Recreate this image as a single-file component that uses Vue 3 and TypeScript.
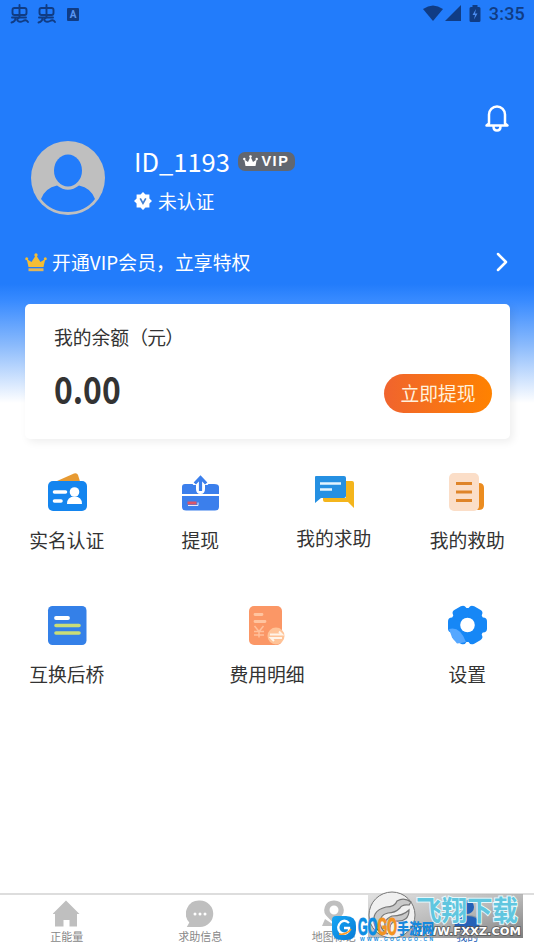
<script setup lang="ts">
interface Entry {
  id: string
  label: string
}

const primary: Entry[] = [
  { id: 'identity', label: '实名认证' },
  { id: 'withdraw', label: '提现' },
  { id: 'help', label: '我的求助' },
  { id: 'rescue', label: '我的救助' },
]

const secondary: Entry[] = [
  { id: 'bridge', label: '互换后桥' },
  { id: 'fees', label: '费用明细' },
  { id: 'settings', label: '设置' },
]

const teeth: number[] = [0, 60, 120, 180, 240, 300]
</script>

<template>
  <main class="page">
    <header class="hero">
      <div class="status">
        <div class="status-left">
          <svg v-for="n in 2" :key="n" class="bug" width="20" height="20" viewBox="0 0 20 20" fill="none" stroke="#103c84" stroke-width="1.900" stroke-linecap="round" stroke-linejoin="round">
            <rect x="2.500" y="4" width="14" height="7" rx="2" />
            <path d="M9.500 1v12.500M2 13.500h14M5.500 14q0 3.500-4 4.500M9 14q-3 1.500-1 3t5 0q3-2 5 1" />
          </svg>
          <span class="ime">A</span>
        </div>
        <div class="status-right">
          <svg width="20" height="16" viewBox="0 0 20 16"><path d="M0 4Q10-3 20 4L10 16Z" fill="#103c84" /></svg>
          <svg width="16" height="16" viewBox="0 0 16 16"><path d="M16 0V16H0Z" fill="#103c84" /></svg>
          <svg class="battery" width="12" height="17" viewBox="0 0 12 17">
            <path d="M3.500 2V0h5v2H10q1.500 0 1.500 1.500v12Q11.500 17 10 17H2Q.5 17 .5 15.500v-12Q.5 2 2 2Z" fill="#103c84" />
            <path d="M7 4 3.500 10H6l-1 4.500L8.500 8.500H6Z" fill="#4c8df0" />
          </svg>
          <span class="clock">3:35</span>
        </div>
      </div>

      <div class="notice">
        <svg width="26" height="28" viewBox="0 0 26 28" fill="none" stroke="#fff" stroke-width="2.500" stroke-linecap="round" stroke-linejoin="round">
          <path d="M5 19.500V10.500a8 8 0 0 1 16 0V19.500l2.500 2H2.500ZM9.500 22.500q0 4 3.500 4t3.500-4" />
        </svg>
      </div>

      <section class="profile">
        <svg class="avatar" width="74" height="74" viewBox="0 0 74 74">
          <circle cx="37" cy="37" r="37" fill="#bfbfbf" />
          <ellipse cx="37" cy="29.500" rx="14" ry="16" fill="#227cfb" />
          <path d="M10 58Q14 47 26 44.500Q37 53 48 44.500Q60 47 64 58Q54 71 37 71Q20 71 10 58Z" fill="#227cfb" />
        </svg>
        <div class="who">
          <div class="name-row">
            <span class="name">ID_1193</span>
            <span class="vip">
              <svg width="15" height="12" viewBox="0 0 15 12" fill="#fff">
                <path d="M2.500 11 1.300 4.500 5 7 7.500 1.500 10 7l3.700-2.500L12.500 11Z" />
                <circle cx="1.300" cy="4" r="1.200" /><circle cx="7.500" cy="1.500" r="1.300" /><circle cx="13.700" cy="4" r="1.200" />
              </svg>
              VIP
            </span>
          </div>
          <div class="auth-row">
            <svg width="18" height="18" viewBox="0 0 18 18">
              <path d="M9 0 11.500 2.600 15.400 2.600 15.400 6.500 18 9 15.400 11.500V15.400H11.500L9 18 6.500 15.400H2.600V11.500L0 9 2.600 6.500V2.600H6.500Z" fill="#fff" />
              <path d="m6.200 6.300 2.800 5 2.800-5" fill="none" stroke="#427fd0" stroke-width="1.700" />
            </svg>
            <span>未认证</span>
          </div>
        </div>
      </section>

      <div class="member">
        <svg width="22" height="19" viewBox="0 0 22 19">
          <path d="M3.500 14 1.700 6 6.500 9 11 2l4.500 7 4.800-3-1.800 8Z" fill="#f4bd35" />
          <circle cx="1.700" cy="5.800" r="1.500" fill="#f4bd35" /><circle cx="11" cy="2" r="1.700" fill="#f4bd35" /><circle cx="20.300" cy="5.800" r="1.500" fill="#f4bd35" />
          <path d="M3.500 15.300h15v2.900h-15Z" fill="#e2b659" />
        </svg>
        <span class="member-text">开通VIP会员，立享特权</span>
        <svg width="12" height="20" viewBox="0 0 12 20"><path d="m2 2 8 8-8 8" fill="none" stroke="#fff" stroke-width="2.500" stroke-linecap="round" stroke-linejoin="round" /></svg>
      </div>

      <section class="balance">
        <div class="balance-title">我的余额<span class="unit">（元）</span></div>
        <div class="balance-row">
          <strong>0.00</strong>
          <button class="cash">立即提现</button>
        </div>
      </section>
    </header>

    <nav class="menu">
      <a v-for="e in primary" :key="e.id" class="entry" :class="e.id">
        <svg class="icon" width="42" height="42" viewBox="0 0 42 42">
          <g v-if="e.id === 'identity'">
            <path d="M11 10 28 2.500q3-1 4 1.500l2.500 8Z" fill="#e79a32" />
            <rect x="2" y="10" width="39" height="30" rx="5" fill="#1485ef" />
            <path d="M8.500 21h11M8.500 30h6.500" stroke="#fff" stroke-width="3.600" stroke-linecap="round" />
            <circle cx="28.500" cy="21" r="4.800" fill="#fff" />
            <path d="M21 33q0-7.500 7.500-7.500T36 33Z" fill="#fff" />
          </g>
          <g v-else-if="e.id === 'withdraw'">
            <path d="M3 16q0-3 3-3h29q5 0 5 3v7H3ZM3 25h37v11q0 3.500-4 3.500H7q-4 0-4-3.500Z" fill="#3b7fec" />
            <path d="m13.500 14 8-8.500 8 8.500h-3.500v4q0 5-4.500 5t-4.500-5v-4Z" fill="#fff" />
            <path d="m15.800 12.500 5.700-6 5.700 6M21.500 7v13" fill="none" stroke="#3b7fec" stroke-width="3.200" />
            <path d="M8.500 32h9" stroke="#d95669" stroke-width="3" /><path d="M9 34.500h10v-3" fill="none" stroke="#e6e9f8" />
          </g>
          <g v-else-if="e.id === 'help'" transform="translate(0 -3)">
            <path d="M33 13h6q2 0 2 2v25l-6-6H12q-2 0-2-2v-2h23Z" fill="#f4b51c" />
            <path d="M3 8h28q2 0 2 2v18q0 2-2 2H8l-6 5V9q0-1 1-1Z" fill="#2590e2" />
            <path d="M7 15.500h21M7 21.500h12" stroke="#e3f5ff" stroke-width="2.500" />
          </g>
          <g v-else>
            <path d="M30 12h3q5 0 5 5v17q0 5-5 5h-3Z" fill="#eb8c20" />
            <rect x="3" y="2" width="30" height="38" rx="5" fill="#fbdec8" />
            <path d="M10 12.500h16M10 21h16M10 29.500h16" stroke="#df8429" stroke-width="2.800" />
          </g>
        </svg>
        <span>{{ e.label }}</span>
      </a>
    </nav>

    <nav class="menu second">
      <a v-for="e in secondary" :key="e.id" class="entry" :class="e.id">
        <svg class="icon" width="42" height="42" viewBox="0 0 42 42">
          <g v-if="e.id === 'bridge'">
            <rect x="2" y="2" width="38.500" height="39" rx="4.500" fill="#3480e8" />
            <path d="M10 14h12" stroke="#fff" stroke-width="3.800" stroke-linecap="round" />
            <path d="M10 21.500h23M10 29h23" stroke="#c9dd77" stroke-width="3.600" stroke-linecap="round" />
          </g>
          <g v-else-if="e.id === 'fees'">
            <rect x="3" y="2" width="33" height="39" rx="5" fill="#fb9766" />
            <path d="M9 10.500h7M9 17.500h10" stroke="#ffc4a0" stroke-width="2.800" stroke-linecap="round" />
            <path d="m8.500 22 4.500 5.500 4.500-5.500M13 27v6.500M8 27.500h10M8 31h10" fill="none" stroke="#ffc09b" stroke-width="1.500" />
            <circle cx="30" cy="32" r="8.500" fill="#ffc397" />
            <path d="M24 30.500h12l-3-3M36 34H25l3 3" fill="none" stroke="#fff4e8" stroke-width="2" />
          </g>
          <g v-else>
            <g fill="#1687f6">
              <circle cx="21.500" cy="21" r="17" />
              <rect v-for="a in teeth" :key="a" x="14" y="1.500" width="15" height="12" rx="4" :transform="`rotate(${a + 30} 21.500 21)`" />
            </g>
            <path d="M3 25q11-3 17 13l-5 1-4 .5-5-6Z" fill="#55a7ff" />
            <circle cx="21.500" cy="21" r="7.300" fill="#fff" />
          </g>
        </svg>
        <span>{{ e.label }}</span>
      </a>
    </nav>

    <footer class="tabs">
      <a class="tab">
        <svg width="28" height="28" viewBox="0 0 28 28"><path d="M13 .5 26.500 14H24v12.500H16.500V20h-6v6.500H2V14H-.5Z" fill="#bfbfbf" /></svg>
        <span>正能量</span>
      </a>
      <a class="tab">
        <svg width="28" height="28" viewBox="0 0 28 28">
          <path d="M14 .5a13 13 0 1 1 0 26.500H.8l2.500-4.500A13.200 13.200 0 0 1 14 .5Z" fill="#bfbfbf" />
          <circle cx="9" cy="14" r="1.500" fill="#fff" /><circle cx="14" cy="14" r="1.500" fill="#fff" /><circle cx="19" cy="14" r="1.500" fill="#fff" />
        </svg>
        <span>求助信息</span>
      </a>
      <a class="tab">
        <svg width="28" height="28" viewBox="0 0 28 28">
          <path fill-rule="evenodd" d="M14 .5a9.500 9.500 0 0 1 6 17l-6 6-6-6A9.500 9.500 0 0 1 14 .5Zm0 5a4.500 4.500 0 1 0 0 9 4.500 4.500 0 0 0 0-9Z" fill="#bfbfbf" />
          <path d="M5 19 2 26h24l-3-7-9 6Z" fill="#bfbfbf" />
        </svg>
        <span>地图标记</span>
      </a>
      <a class="tab active">
        <svg width="28" height="28" viewBox="0 0 28 28"><circle cx="14" cy="7" r="6.500" fill="#2461b8" /><path d="M1 27V22q1-7 13-7t13 7v5Z" fill="#2461b8" /></svg>
        <span>我的</span>
      </a>

      <svg class="overlay" width="206" height="62" viewBox="0 0 206 62">
        <defs>
          <linearGradient id="plate" x1="0" y1="0" x2="1" y2="1">
            <stop offset="0" stop-color="#ddd" stop-opacity=".85" /><stop offset=".5" stop-color="#aaa" stop-opacity=".8" /><stop offset="1" stop-color="#666" stop-opacity=".85" />
          </linearGradient>
          <linearGradient id="drop" x1="0" y1="0" x2="1" y2="1"><stop offset="0" stop-color="#16a7f5" /><stop offset="1" stop-color="#0879d5" /></linearGradient>
        </defs>
        <rect x="39" y="6" width="155" height="44" fill="url(#plate)" />
        <circle cx="138" cy="19" r="7" fill="#2461b8" /><path d="M126 42V35q1-7 12-7t12 7v7Z" fill="#2461b8" />
        <circle cx="63" cy="27" r="23" fill="#f0f0f0" stroke="#777" />
        <path d="M46 38Q41 23 57 19Q66 19 68 13Q75 9 82 14L80 17Q73 16 71 20Q66 25 59 25Q50 27 51 36Q53 43 59 46Q50 46 46 38ZM57 42Q53 32 63 28Q74 28 80 22Q80 34 67 33Q60 34 61 44" fill="#c9c9c9" stroke="#777" stroke-width="1.200" />
        <text class="cn-mark" x="87" y="33" textLength="102" lengthAdjust="spacingAndGlyphs">飞翔下载</text>
        <text class="url-mark" x="83" y="47" textLength="109" lengthAdjust="spacingAndGlyphs">WWW.FXXZ.COM</text>
        <g transform="translate(0 10)">
          <path d="M3 22q0-4 4-4h10q10 0 10 10v4q0 10-10 10h-4Q3 42 3 32Z" fill="url(#drop)" />
          <path d="M20 25q-4-4-8-1-5 5-1 10 5 4 9-1v-3h-5" fill="none" stroke="#fff" stroke-width="2.300" />
          <path d="M10 36q8 1 12-5" fill="none" stroke="#ff9a21" stroke-width="1.500" />
          <text class="go-mark" x="29" y="37" textLength="39" lengthAdjust="spacingAndGlyphs"><tspan fill="#0c8de3" stroke="#0c8de3">GO</tspan><tspan fill="#f39320" stroke="#f39320">GO</tspan></text>
          <text class="game-mark" x="68" y="36" textLength="37" lengthAdjust="spacingAndGlyphs">手游网</text>
          <text class="tiny-mark" x="31" y="43" textLength="73">WWW.GOGOGO.CN</text>
        </g>
      </svg>
    </footer>
  </main>
</template>

<style>
body {
  background: #fff;
}
</style>

<style scoped>
* {
  box-sizing: border-box;
}
.page {
  width: 534px;
  height: 950px;
  display: flex;
  flex-direction: column;
  overflow: hidden;
  background: #fff;
  color: #333;
  font-family: "Noto Sans CJK SC", sans-serif;
  font-size: 18.800px;
}
svg {
  display: block;
  flex: none;
}
.hero {
  height: 471px;
  flex: none;
  background: linear-gradient(#227cfb 0, #227cfb 284px, #378aff 300px, #8abafc 345px, #fff 403px);
}
.status {
  height: 28px;
  display: flex;
  justify-content: space-between;
  padding: 0 9px 0 10px;
  color: #103c84;
}
.status-left,
.status-right {
  display: flex;
  align-items: center;
}
.bug {
  margin-right: 7px;
}
.ime {
  width: 12px;
  height: 13px;
  margin-left: 3px;
  border-radius: 1px;
  background: #103c84;
  color: #5a96f2;
  font: bold 10px/13px Roboto, sans-serif;
  text-align: center;
}
.status-right {
  padding-bottom: 2px;
}
.status-right svg + svg {
  margin-left: 2px;
}
.status-right .battery {
  margin-left: 8px;
}
.clock {
  margin-left: 8px;
  padding-top: 2px;
  font: 500 18px/26px Roboto, sans-serif;
  letter-spacing: .2px;
}
.notice {
  height: 113px;
  padding: 76px 24px 0 0;
  display: flex;
  justify-content: flex-end;
}
.profile {
  height: 98px;
  display: flex;
  padding-left: 31px;
}
.who {
  margin-left: 29px;
}
.name-row,
.auth-row {
  display: flex;
  align-items: center;
  height: 40px;
  color: #fff;
}
.name {
  margin-top: -2px;
  font-size: 25.500px;
}
.vip {
  width: 57px;
  height: 19px;
  margin-left: 8px;
  border-radius: 7px;
  background: #626770;
  display: flex;
  align-items: center;
  justify-content: center;
  gap: 3px;
  font: bold 14.500px/19px "Liberation Sans", sans-serif;
  letter-spacing: 1.500px;
}
.auth-row {
  gap: 6px;
}
.auth-row span {
  margin-top: -2px;
}
.member {
  height: 46px;
  margin: 0 26px 19px 25px;
  display: flex;
  align-items: center;
  color: #fff;
}
.member-text {
  flex: 1;
  margin: -2px 0 0 5px;
  letter-spacing: .1px;
}
.balance {
  height: 135px;
  margin: 0 24px 0 25px;
  padding: 18px 18px 0 29px;
  border-radius: 5px;
  background: #fff;
  box-shadow: 3px 3px 8px rgba(0, 0, 0, .07);
}
.balance-title {
  height: 30px;
  line-height: 30px;
}
.unit {
  letter-spacing: -.700px;
}
.balance-row {
  height: 76px;
  display: flex;
  justify-content: space-between;
  align-items: center;
}
strong {
  margin-top: -5px;
  font-size: 37px;
  line-height: 40px;
  font-weight: 700;
  transform: scaleX(.86);
  transform-origin: left center;
}
.cash {
  width: 108px;
  height: 39px;
  margin-top: 6px;
  padding: 0;
  border: 0;
  border-radius: 20px;
  background: linear-gradient(90deg, #f0642e, #ff8200);
  color: #fff1dc;
  font: 18.800px/38px "Noto Sans CJK SC", sans-serif;
}
.menu {
  height: 133px;
  flex: none;
  display: flex;
  justify-content: space-between;
}
.entry {
  width: 133.500px;
  display: flex;
  flex-direction: column;
  align-items: center;
  line-height: 28px;
}
.entry span {
  margin-top: 13px;
}
.help span {
  margin-top: 11px;
}
.second span {
  margin-top: 14px;
}
.tabs {
  position: relative;
  height: 57px;
  flex: none;
  margin-top: auto;
  display: flex;
  border-top: 2px solid #ddd;
}
.tab {
  flex: 1;
  display: flex;
  flex-direction: column;
  align-items: center;
  padding-top: 5px;
  color: #888;
  font-size: 11px;
  line-height: 17px;
}
.active {
  color: #2461b8;
}
.overlay {
  position: absolute;
  left: 329px;
  top: -7px;
}
.cn-mark {
  font-size: 28px;
  font-weight: 700;
  fill: #60c6df;
  stroke: #e6f8fc;
  stroke-width: 2px;
  paint-order: stroke;
}
.url-mark {
  font: bold 11px "DejaVu Sans", sans-serif;
  fill: #fff;
  stroke: #555;
  stroke-width: 1.500px;
  paint-order: stroke;
}
.go-mark {
  font: bold 23px "Liberation Sans", sans-serif;
  stroke-width: 1px;
}
.game-mark {
  font-size: 15px;
  font-weight: 900;
  fill: #1688dd;
}
.tiny-mark {
  font: bold 5px "Liberation Sans", sans-serif;
  fill: #168fe3;
}
</style>
